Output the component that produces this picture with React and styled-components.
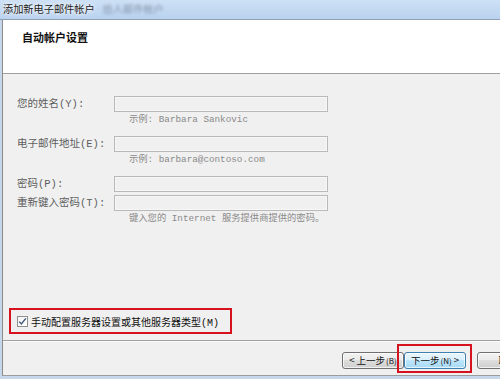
import React from "react";
import styled, { createGlobalStyle } from "styled-components";

const Global = createGlobalStyle`
  html, body { margin: 0; padding: 0; overflow: hidden; background: #c9d9ec; }
  * { box-sizing: border-box; }
`;

const CJK = `"Noto Sans CJK SC", "Liberation Sans", sans-serif`;
const MONO = `"Liberation Mono", "Noto Sans CJK SC", monospace`;

const Window = styled.div`
  width: 500px;
  height: 379px;
  display: flex;
  flex-direction: column;
  background: #c6d7ec;
  overflow: hidden;
  font-family: ${CJK};
`;

const TitleBar = styled.div`
  height: 20px;
  flex: none;
  display: flex;
  align-items: center;
  padding-left: 3px;
  background: linear-gradient(#cde0f5, #bad2ef);
  border-bottom: 1px solid #8fa0b4;
  font-size: 10.2px;
  color: #1b1b1b;
  gap: 8px;
`;

const TitleText = styled.span`
  text-shadow: 0 0 6px #fff, 0 0 3px #fff;
  line-height: 1;
`;

const Ghost = styled.span`
  color: #6a7a90;
  filter: blur(1.4px);
  opacity: 0.7;
  line-height: 1;
`;

const Frame = styled.div`
  flex: 1;
  display: flex;
  flex-direction: column;
  margin-left: 2px;
  margin-bottom: 3px;
  border-left: 1px solid #8c8c8c;
  border-bottom: 1px solid #9c9c9c;
  min-height: 0;
`;

const Header = styled.div`
  height: 54px;
  flex: none;
  background: #fff;
  border-bottom: 1px solid #a0a0a0;
  padding: 9px 0 0 19px;
  font-size: 11px;
  font-weight: bold;
  color: #111;
`;

const Body = styled.div`
  height: 266px;
  flex: none;
  display: flex;
  flex-direction: column;
  background: #f0f0f0;
  padding: 22px 0 6px 14px;
`;

const Group = styled.div`
  display: flex;
  flex-direction: column;
  gap: ${(p) => p.$gap || 0}px;
  margin-bottom: 8px;
`;

const Row = styled.div`
  display: grid;
  grid-template-columns: 97px 214px;
  align-items: center;
  height: 16px;
`;

const Label = styled.span`
  font-family: ${MONO};
  font-size: 10.5px;
  color: #5e5e5e;
  white-space: nowrap;
  line-height: 16px;
`;

const Input = styled.div`
  height: 16px;
  border: 1px solid #b9b9b9;
  background: #f0f0f0;
  box-shadow: inset 0 0 0 1px #f7f7f7;
`;

const Hint = styled.div`
  padding-left: 112px;
  height: 16px;
  line-height: 16px;
  margin-top: ${(p) => p.$mt || 0}px;
  font-family: ${MONO};
  font-size: 9.3px;
  color: #8a8a8a;
  white-space: nowrap;
`;

const Spacer = styled.div`
  flex: 1;
`;

const CheckRow = styled.div`
  align-self: flex-start;
  margin-left: -8px;
  width: 223px;
  height: 26px;
  display: flex;
  align-items: center;
  gap: 3px;
  padding-left: 6px;
  border: 2px solid #d5121e;
`;

const Box = styled.span`
  width: 11px;
  height: 11px;
  flex: none;
  border: 1px solid #8e8f8f;
  background: linear-gradient(135deg, #f4f4f4, #ffffff);
  display: flex;
  align-items: center;
  justify-content: center;
`;

const CheckText = styled.span`
  font-family: ${MONO};
  font-size: 10px;
  color: #111;
  white-space: nowrap;
`;

const Footer = styled.div`
  flex: 1;
  display: flex;
  align-items: flex-start;
  padding: 11px 0 0 339px;
  background: #f0f0f0;
  border-top: 1px solid #a0a0a0;
  box-shadow: inset 0 1px 0 #fbfbfb;
`;

const Button = styled.div`
  flex: none;
  width: 62px;
  height: 17px;
  display: flex;
  align-items: center;
  justify-content: center;
  border: 1px solid ${(p) => (p.$primary ? "#3c7fb1" : "#707070")};
  border-radius: 3px;
  background: ${(p) =>
    p.$primary
      ? "linear-gradient(#eaf6fd 0%, #d9f0fc 45%, #bee6fd 50%, #a7d9f5 100%)"
      : "linear-gradient(#f2f2f2 0%, #ebebeb 45%, #dddddd 50%, #cfcfcf 100%)"};
  box-shadow: inset 0 0 0 1px rgba(255, 255, 255, 0.7);
  font-family: ${CJK};
  font-size: 9.5px;
  line-height: 1;
  color: #111;
  white-space: nowrap;
`;

const Key = styled.span`
  font-size: 8px;
  margin-left: 1px;
`;

const Marked = styled.div`
  position: relative;
  flex: none;
  margin-right: 11px;
`;

const RedBox = styled.div`
  position: absolute;
  left: -7px;
  top: -8px;
  width: 75px;
  height: 29px;
  border: 2px solid #d5121e;
  pointer-events: none;
`;

export default function App() {
  return (
    <>
      <Global />
      <Window>
        <TitleBar>
          <TitleText>添加新电子邮件帐户</TitleText>
          <Ghost>给人邮件帐户</Ghost>
        </TitleBar>
        <Frame>
          <Header>自动帐户设置</Header>
          <Body>
            <Group>
              <Row>
                <Label>您的姓名(Y):</Label>
                <Input />
              </Row>
              <Hint>示例: Barbara Sankovic</Hint>
            </Group>
            <Group>
              <Row>
                <Label>电子邮件地址(E):</Label>
                <Input />
              </Row>
              <Hint>示例: barbara@contoso.com</Hint>
            </Group>
            <Group $gap={3}>
              <Row>
                <Label>密码(P):</Label>
                <Input />
              </Row>
              <Row>
                <Label>重新键入密码(T):</Label>
                <Input />
              </Row>
              <Hint $mt={-3}>键入您的 Internet 服务提供商提供的密码。</Hint>
            </Group>
            <Spacer />
            <CheckRow>
              <Box>
                <svg width="9" height="9" viewBox="0 0 9 9">
                  <path d="M1.2 4.6 L3.4 7 L7.8 1.4" fill="none" stroke="#3d5676" strokeWidth="1.4" />
                </svg>
              </Box>
              <CheckText>手动配置服务器设置或其他服务器类型(M)</CheckText>
            </CheckRow>
          </Body>
          <Footer>
            <Button>&lt; 上一步<Key>(B)</Key></Button>
            <Marked>
              <Button $primary>下一步<Key>(N)</Key>&nbsp;&gt;</Button>
              <RedBox />
            </Marked>
            <Button>取消</Button>
          </Footer>
        </Frame>
      </Window>
    </>
  );
}
